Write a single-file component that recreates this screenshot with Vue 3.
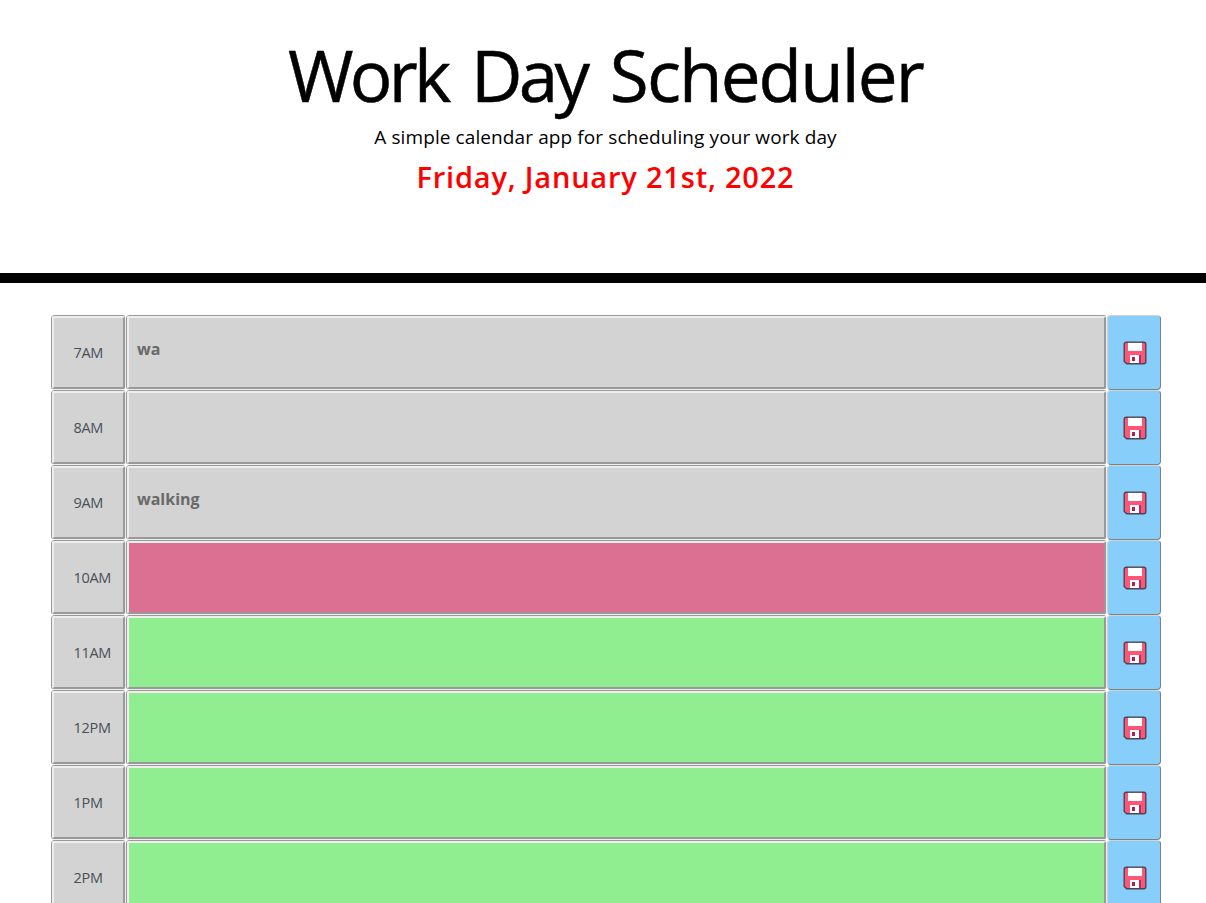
<script setup>
const rows = [
  { hour: '7AM', text: 'wa', state: 'past' },
  { hour: '8AM', text: '', state: 'past' },
  { hour: '9AM', text: 'walking', state: 'past' },
  { hour: '10AM', text: '', state: 'present' },
  { hour: '11AM', text: '', state: 'future' },
  { hour: '12PM', text: '', state: 'future' },
  { hour: '1PM', text: '', state: 'future' },
  { hour: '2PM', text: '', state: 'future' },
]
</script>

<template>
  <div class="page">
    <header>
      <h1><span class="w1">Work</span> <span class="w2">Day</span> <span class="w3">Scheduler</span></h1>
      <p class="lead">A simple calendar app for scheduling your work day</p>
      <p class="date">Friday, January 21st, 2022</p>
    </header>
    <main>
      <div v-for="row in rows" :key="row.hour" class="row">
        <div class="cell hour"><div class="inner">{{ row.hour }}</div></div>
        <div class="cell task" :class="row.state"><div class="inner">{{ row.text }}</div></div>
        <button class="save" aria-label="Save">
          <svg width="24" height="24" viewBox="0 0 24 24">
            <path d="M3.2 1.2H20.8Q22.8 1.2 22.8 3.2V20.8Q22.8 22.8 20.8 22.8H3.7L1.2 20.5V3.2Q1.2 1.2 3.2 1.2Z" fill="#ff5576" stroke="#4c4557" stroke-width="1.4" />
            <path d="M5 1.9H19V10H5Z" fill="#fff" />
            <path d="M7 14H18V22H7Z" fill="#fff" />
            <path d="M16 14H18V22H16Z" fill="#b0305c" />
            <path d="M9 16H12V20H9Z" fill="#a82350" />
          </svg>
        </button>
      </div>
    </main>
  </div>
</template>

<style>
body { overflow: hidden; background: #fff; }
</style>

<style scoped>
.page { height: 903px; overflow: hidden; font-family: "Trebuchet MS", "Open Sans", sans-serif; color: #000; }
header { box-sizing: border-box; height: 283px; padding: 32px 0 0 5px; border-bottom: 10px solid #000; text-align: center; }
h1 { margin: 0; font-size: 71px; line-height: 86px; font-weight: 400; white-space: nowrap; word-spacing: 5px; -webkit-text-stroke: 0.5px #000; }
.w1 { letter-spacing: -3.8px; }
.w2 { letter-spacing: -3.7px; }
.w3 { letter-spacing: -1.9px; }
.lead { margin: 4px 0 0; font-size: 19px; line-height: 30px; letter-spacing: 0.1px; }
.date { margin: 7px 0 0; font-size: 29px; line-height: 36px; font-weight: 600; letter-spacing: 0.8px; color: #f00; }
main { padding: 32px 45px 0 51px; }
.row { display: flex; height: 75px; }
.cell {
  box-sizing: border-box;
  height: 75px;
  border: 1px solid;
  border-color: #999 #eee #eee #999;
  border-radius: 4px;
  background: #d3d3d3;
}
.inner {
  box-sizing: border-box;
  height: 100%;
  border: 2px solid;
  border-color: #eee #999 #999 #eee;
  border-radius: 2px;
}
.hour { width: 75px; font-size: 14.5px; line-height: 22px; letter-spacing: -0.3px; color: #495057; }
.hour .inner { padding: 24px 0 0 19.5px; }
.task { width: 981px; font-size: 16px; line-height: 24px; font-weight: 700; color: #696969; }
.task .inner { padding: 19px 0 0 8px; }
.present { background: #db7093; }
.future { background: #90ee90; }
.save {
  box-sizing: border-box;
  width: 54px;
  height: 75px;
  padding: 1px 0 0 1px;
  display: flex;
  align-items: center;
  justify-content: center;
  background: #87cefa;
  border: 1px solid;
  border-color: #d3d3d3 #808080 #808080 #d3d3d3;
  border-radius: 4px;
}
</style>
